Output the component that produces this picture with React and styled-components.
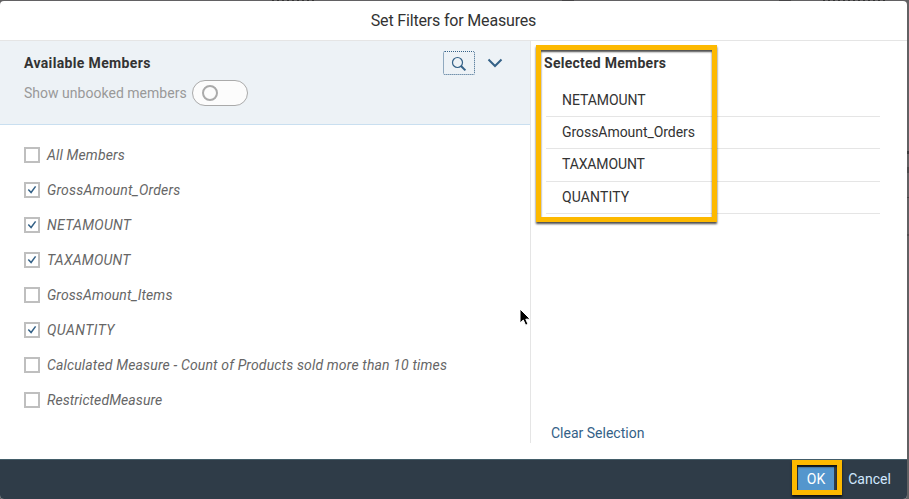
import React from "react";
import styled, { createGlobalStyle } from "styled-components";

const GlobalStyle = createGlobalStyle`
  * { box-sizing: border-box; }
  body {
    margin: 0;
    overflow: hidden;
    background: #626163;
    font-family: Roboto, "Liberation Sans", sans-serif;
    font-size: 14px;
    color: #333;
  }
`;

const Backdrop = styled.div`
  height: 499px;
  padding: 1px 2px 0 0;
  background:
    linear-gradient(#3a393b, #3a393b) 907px 151px / 2px 3px no-repeat,
    linear-gradient(#4a494b, #4a494b) 907px 167px / 2px 6px no-repeat,
    linear-gradient(#454446, #454446) 907px 197px / 2px 1px no-repeat,
    linear-gradient(#4f4e50, #4f4e50) 907px 234px / 2px 2px no-repeat,
    repeating-linear-gradient(90deg, #333 0 2px, #626163 2px 5px) 272px 0 / 42px 1px no-repeat,
    linear-gradient(#454446, #454446) 562px 0 / 12px 1px no-repeat,
    linear-gradient(#454446, #454446) 779px 0 / 12px 1px no-repeat,
    repeating-linear-gradient(90deg, #333 0 2px, #626163 2px 5px) 823px 0 / 62px 1px no-repeat,
    #626163;
`;

const Dialog = styled.div`
  position: relative;
  display: flex;
  flex-direction: column;
  height: 498px;
  border-radius: 4px;
  background: #fff;
  overflow: hidden;
`;

const Header = styled.header`
  flex: 0 0 40px;
  border-bottom: 1px solid #e5e5e5;
  text-align: center;
  font-size: 16px;
  line-height: 39px;
`;

const Body = styled.div`
  display: flex;
  flex: 0 0 402px;
`;

const Available = styled.section`
  width: 531px;
  border-right: 1px solid #e5e5e5;
`;

const Tools = styled.div`
  display: flex;
  justify-content: space-between;
  height: 84px;
  padding: 10px 27px 0 24px;
  background: #edf2f6;
  border-bottom: 1px solid #c9dff0;
`;

const Heading = styled.h2`
  margin: 0;
  font-size: 14px;
  font-weight: 700;
  line-height: 24px;
  letter-spacing: ${(p) => p.$track || 0}px;
`;

const Text = styled.span`
  white-space: pre;
  letter-spacing: ${(p) => p.$track || 0}px;
`;

const SwitchRow = styled.div`
  display: flex;
  align-items: center;
  gap: 7px;
  height: 26px;
  margin-top: 5px;
  color: #999;
`;

const SwitchLabel = styled.span`
  width: 161px;
  white-space: nowrap;
  letter-spacing: 0.02px;
`;

const Switch = styled.span`
  width: 56px;
  height: 26px;
  padding: 4px 9px;
  border: 1px solid #aaa;
  border-radius: 13px;
  background: #fcfcfc;
`;

const Knob = styled.span`
  display: block;
  width: 16px;
  height: 16px;
  border: 2px solid #aaa;
  border-radius: 50%;
`;

const Actions = styled.div`
  display: flex;
  gap: 12px;
`;

const SearchButton = styled.button`
  display: flex;
  width: 32px;
  height: 24px;
  padding: 0;
  border: 1px dotted #346187;
  border-radius: 2px;
  background: transparent;
`;

const ChevronButton = styled.button`
  display: flex;
  width: 16px;
  height: 24px;
  padding: 0;
  border: 0;
  background: transparent;
`;

const List = styled.ul`
  margin: 0;
  padding: 12px 0 0 24px;
  list-style: none;
`;

const Member = styled.li`
  display: flex;
  align-items: center;
  gap: 7px;
  height: 35px;
  color: #666;
  font-style: italic;
`;

const Checkbox = styled.span`
  display: flex;
  width: 16px;
  height: 16px;
  border: 2px solid #bfbfbf;
  background: #fff;
`;

const Selected = styled.section`
  display: flex;
  flex-direction: column;
  width: 349px;
  padding: 10px 0 0 13px;
`;

const SelectedList = styled.ul`
  margin: 10px 0 0 2px;
  padding: 0;
  list-style: none;
`;

const SelectedItem = styled.li`
  height: ${(p) => p.$height}px;
  padding-left: 16px;
  border-bottom: 1px solid #e5e5e5;
  line-height: 30px;
`;

const ClearLink = styled.a`
  margin: auto 0 1px 7px;
  color: #346187;
  line-height: 18px;
`;

const Footer = styled.footer`
  display: flex;
  align-items: center;
  justify-content: flex-end;
  gap: 14px;
  flex: 0 0 40px;
  margin-top: auto;
  padding: 0 16px 2px 0;
  background: #2f3c48;
  border-top: 1px solid #435d69;
  color: #d1e8ff;
`;

const OkButton = styled.button`
  width: 36px;
  height: 24px;
  padding: 0;
  border: 0;
  background: #5496cd;
  color: #fff;
  font: inherit;
`;

const CancelButton = styled.button`
  width: 43px;
  padding: 0;
  border: 0;
  background: transparent;
  color: inherit;
  font: inherit;
  white-space: nowrap;
`;

const Highlight = styled.div`
  position: absolute;
  left: ${(p) => p.$x}px;
  top: ${(p) => p.$y}px;
  width: ${(p) => p.$w}px;
  height: ${(p) => p.$h}px;
  border: 5px solid #fdb900;
  box-shadow: 0 2px 2px rgba(0, 0, 0, 0.7), inset 0 2px 2px rgba(0, 0, 0, 0.7);
  pointer-events: none;
`;

const Pointer = styled.svg`
  position: absolute;
  left: 518px;
  top: 306px;
`;

const members = [
  { name: "All Members", track: 0.15 },
  { name: "GrossAmount_Orders", checked: true, track: 0.2 },
  { name: "NETAMOUNT", checked: true, track: 0.3 },
  { name: "TAXAMOUNT", checked: true, track: 0.25 },
  { name: "GrossAmount_Items", track: 0.1 },
  { name: "QUANTITY", checked: true, track: 0.45 },
  { name: "Calculated Measure - Count of Products sold more than 10 times", track: 0.15 },
  { name: "RestrictedMeasure", track: 0.08 },
];

const selected = [
  { name: "NETAMOUNT", height: 32, track: -0.05 },
  { name: "GrossAmount_Orders", height: 32, track: -0.05 },
  { name: "TAXAMOUNT", height: 33, track: -0.13 },
  { name: "QUANTITY", height: 32, track: 0.12 },
];

const SearchIcon = () => (
  <svg width="30" height="22" viewBox="0 0 30 22" fill="none" stroke="#346187">
    <circle cx="13.5" cy="10.5" r="5" strokeWidth="1.2" />
    <path d="M17 14l4.4 4.4" strokeWidth="2" />
  </svg>
);

const ChevronIcon = () => (
  <svg width="16" height="24" viewBox="0 0 16 24" fill="none" stroke="#346187" strokeWidth="2">
    <path d="M1.5 8.5L8 15l6.5-6.5" />
  </svg>
);

const Check = () => (
  <svg width="12" height="12" viewBox="0 0 12 12" fill="none" stroke="#346187" strokeWidth="1.5">
    <path d="M2.3 5.5l2.8 3L9.6 2.4" />
  </svg>
);

export default function App() {
  return (
    <Backdrop>
      <GlobalStyle />
      <Dialog>
        <Header><Text $track={-0.17}>Set Filters for Measures</Text></Header>
        <Body>
          <Available>
            <Tools>
              <div>
                <Heading $track={0.35}>Available Members</Heading>
                <SwitchRow>
                  <SwitchLabel>Show unbooked members</SwitchLabel>
                  <Switch><Knob /></Switch>
                </SwitchRow>
              </div>
              <Actions>
                <SearchButton aria-label="Search"><SearchIcon /></SearchButton>
                <ChevronButton aria-label="Expand"><ChevronIcon /></ChevronButton>
              </Actions>
            </Tools>
            <List>
              {members.map((m) => (
                <Member key={m.name}>
                  <Checkbox>{m.checked && <Check />}</Checkbox>
                  <Text $track={m.track}>{m.name}</Text>
                </Member>
              ))}
            </List>
          </Available>
          <Selected>
            <Heading $track={0.26}>Selected Members</Heading>
            <SelectedList>
              {selected.map((s) => (
                <SelectedItem key={s.name} $height={s.height}>
                  <Text $track={s.track}>{s.name}</Text>
                </SelectedItem>
              ))}
            </SelectedList>
            <ClearLink><Text $track={0}>Clear Selection</Text></ClearLink>
          </Selected>
        </Body>
        <Footer>
          <OkButton>OK</OkButton>
          <CancelButton>Cancel</CancelButton>
        </Footer>
        <Highlight $x={536} $y={44} $w={181} $h={177} />
        <Highlight $x={792} $y={459} $w={50} $h={35} />
        <Pointer width="14" height="20" viewBox="0 0 14 20">
          <path d="M2 2v14l3.3-3 2.3 5.2 2.4-1-2.2-5h4.4z" fill="#000" stroke="#fff" />
        </Pointer>
      </Dialog>
    </Backdrop>
  );
}
